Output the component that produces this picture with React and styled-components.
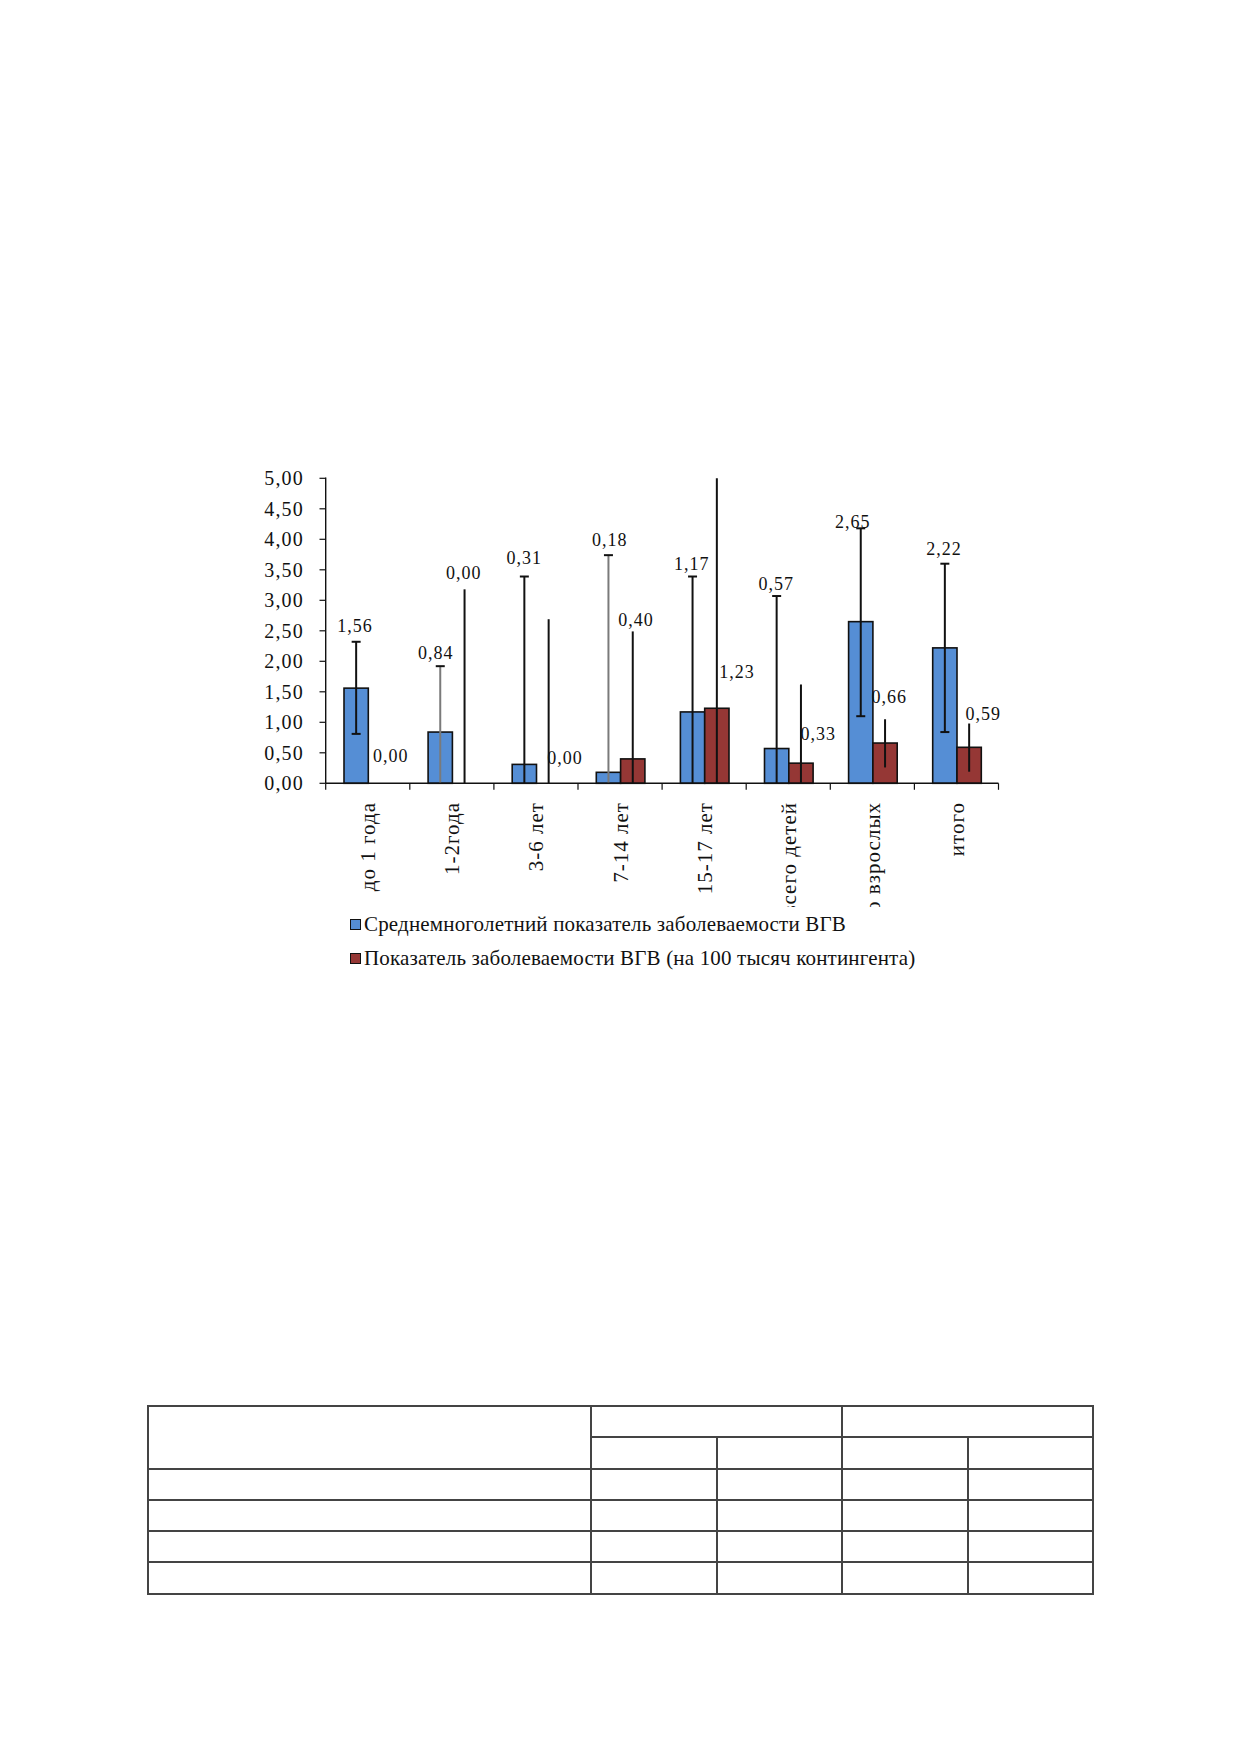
import React from "react";
import styled, { createGlobalStyle } from "styled-components";

const GlobalStyle = createGlobalStyle`
  html, body { margin: 0; padding: 0; background: #fff; }
  body { font-family: "Liberation Serif", "Times New Roman", serif; color: #111; }
`;

const Page = styled.div`
  width: 1239px;
  min-height: 1752px;
  background: #fff;
  display: flex;
  flex-direction: column;
`;

const Figure = styled.div`
  margin: 460px 0 0 230px;
  display: flex;
  flex-direction: column;
`;

const AxisText = styled.text`
  font-family: "Liberation Serif", serif;
  font-size: 20px;
  letter-spacing: 1.2px;
  fill: #111;
`;

const ValueText = styled.text`
  font-family: "Liberation Serif", serif;
  font-size: 18px;
  letter-spacing: 1px;
  fill: #111;
`;

const CategoryText = styled.text`
  font-family: "Liberation Serif", serif;
  font-size: 21px;
  letter-spacing: 1px;
  fill: #111;
`;

const Legend = styled.div`
  padding-left: 120px;
  display: flex;
  flex-direction: column;
`;

const LegendItem = styled.div`
  display: flex;
  align-items: center;
  height: 34px;
  font-size: 21px;
  letter-spacing: 0.17px;
  white-space: nowrap;
`;

const Swatch = styled.span`
  width: 9px;
  height: 9px;
  border: 1.5px solid #111;
  background: ${(p) => p.$color};
  margin-right: 3px;
  flex-shrink: 0;
`;

const Table = styled.table`
  margin: 430px 0 0 147px;
  border-collapse: collapse;
  table-layout: fixed;
  width: 945px;
  td {
    border: 2px solid #444;
    height: 29.3px;
    padding: 0;
  }
`;

const BLUE = "#558ed5";
const RED = "#953735";
const BASE = 783.3;
const UNIT = 61;
const X0 = 325.7;
const STEP = 84.1;
const BAR = 24.3;

const y = (v) => BASE - UNIT * v;

// err: [lo, hi, capLo, capHi, gray]
const groups = [
  { label: "до 1 года", blue: 1.56, red: 0, bErr: [0.81, 2.32, true, true], rErr: null, bLab: [355, 625.7, "1,56"], rLab: [390.7, 755.7, "0,00"] },
  { label: "1-2года", blue: 0.84, red: 0, bErr: [0, 1.92, false, true, true], rErr: [0, 3.18], bLab: [435.7, 653.3, "0,84"], rLab: [463.7, 572.7, "0,00"] },
  { label: "3-6 лет", blue: 0.31, red: 0, bErr: [0, 3.39, false, true], rErr: [0, 2.69], bLab: [524.3, 558.3, "0,31"], rLab: [565, 757.7, "0,00"] },
  { label: "7-14 лет", blue: 0.18, red: 0.4, bErr: [0, 3.74, false, true, true], rErr: [0, 2.49], bLab: [609.7, 540, "0,18"], rLab: [636, 620, "0,40"] },
  { label: "15-17 лет", blue: 1.17, red: 1.23, bErr: [0, 3.39, false, true], rErr: [0, 5.0], bLab: [691.7, 564, "1,17"], rLab: [737, 672, "1,23"] },
  { label: "всего детей", blue: 0.57, red: 0.33, bErr: [0, 3.07, false, true], rErr: [0, 1.62], bLab: [776.3, 584, "0,57"], rLab: [818.3, 734.3, "0,33"] },
  { label: "всего взрослых", blue: 2.65, red: 0.66, bErr: [1.1, 4.18, true, true], rErr: [0.26, 1.05], bLab: [852.7, 521.7, "2,65"], rLab: [889.3, 697.3, "0,66"] },
  { label: "итого", blue: 2.22, red: 0.59, bErr: [0.84, 3.6, true, true], rErr: [0.19, 0.98], bLab: [944, 549.3, "2,22"], rLab: [983.3, 714, "0,59"] },
];

const yTicks = [0, 0.5, 1, 1.5, 2, 2.5, 3, 3.5, 4, 4.5, 5];

function ErrorBar({ x, err }) {
  if (!err) return null;
  const [lo, hi, capLo, capHi, gray] = err;
  const stroke = gray ? "#7a7a7a" : "#111";
  return (
    <g stroke={stroke} strokeWidth="2">
      <line x1={x} x2={x} y1={y(lo)} y2={y(hi)} />
      {capHi && <line x1={x - 4.5} x2={x + 4.5} y1={y(hi)} y2={y(hi)} stroke="#111" />}
      {capLo && <line x1={x - 4.5} x2={x + 4.5} y1={y(lo)} y2={y(lo)} stroke="#111" />}
    </g>
  );
}

function Chart() {
  return (
    <svg width="780" height="447" viewBox="230 460 780 447">
      <defs>
        <clipPath id="catClip">
          <rect x="300" y="786" width="720" height="122" />
        </clipPath>
      </defs>

      {yTicks.map((t) => (
        <g key={t}>
          <line x1="319.5" x2={X0} y1={y(t)} y2={y(t)} stroke="#111" strokeWidth="1.2" />
          <AxisText x="304" y={y(t) + 7} textAnchor="end">
            {t.toFixed(2).replace(".", ",")}
          </AxisText>
        </g>
      ))}

      {groups.map((g, i) => {
        const x = X0 + STEP * i;
        const bx = x + 18.3;
        const rx = bx + BAR;
        return (
          <g key={g.label}>
            {g.blue > 0 && (
              <rect x={bx} y={y(g.blue)} width={BAR} height={UNIT * g.blue} fill={BLUE} stroke="#111" strokeWidth="1.6" />
            )}
            {g.red > 0 && (
              <rect x={rx} y={y(g.red)} width={BAR} height={UNIT * g.red} fill={RED} stroke="#111" strokeWidth="1.6" />
            )}
            <ErrorBar x={bx + BAR / 2} err={g.bErr} />
            <ErrorBar x={rx + BAR / 2} err={g.rErr} />
            <ValueText x={g.bLab[0]} y={g.bLab[1] + 6} textAnchor="middle">{g.bLab[2]}</ValueText>
            <ValueText x={g.rLab[0]} y={g.rLab[1] + 6} textAnchor="middle">{g.rLab[2]}</ValueText>
          </g>
        );
      })}

      <line x1={X0} x2={X0} y1="477.5" y2={BASE} stroke="#111" strokeWidth="1.4" />
      <line x1={X0} x2={X0 + STEP * 8} y1={BASE} y2={BASE} stroke="#111" strokeWidth="1.4" />
      {Array.from({ length: 9 }).map((_, i) => (
        <line key={i} x1={X0 + STEP * i} x2={X0 + STEP * i} y1={BASE} y2={BASE + 6.5} stroke="#111" strokeWidth="1.2" />
      ))}

      <g clipPath="url(#catClip)">
        {groups.map((g, i) => {
          const cx = X0 + STEP * i + STEP / 2;
          return (
            <CategoryText key={g.label} transform={`translate(${cx} 802) rotate(-90)`} x="0" y="7.5" textAnchor="end">
              {g.label}
            </CategoryText>
          );
        })}
      </g>
    </svg>
  );
}

export default function App() {
  return (
    <>
      <GlobalStyle />
      <Page>
        <Figure>
          <Chart />
          <Legend>
            <LegendItem>
              <Swatch $color={BLUE} />
              Среднемноголетний показатель заболеваемости ВГВ
            </LegendItem>
            <LegendItem>
              <Swatch $color={RED} />
              Показатель заболеваемости ВГВ (на 100 тысяч контингента)
            </LegendItem>
          </Legend>
        </Figure>
        <Table>
          <colgroup>
            <col style={{ width: 443 }} />
            <col style={{ width: 126 }} />
            <col style={{ width: 125 }} />
            <col style={{ width: 126 }} />
            <col style={{ width: 125 }} />
          </colgroup>
          <tbody>
            <tr>
              <td rowSpan={2} />
              <td colSpan={2} />
              <td colSpan={2} />
            </tr>
            <tr>
              <td /><td /><td /><td />
            </tr>
            {[0, 1, 2, 3].map((r) => (
              <tr key={r}>
                <td /><td /><td /><td /><td />
              </tr>
            ))}
          </tbody>
        </Table>
      </Page>
    </>
  );
}
